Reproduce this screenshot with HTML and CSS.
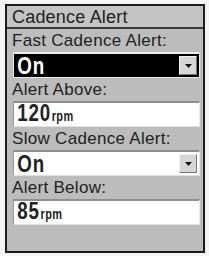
FILE: index.html
```html
<!DOCTYPE html>
<html>

<head>
    <title>Cadence Alert</title>
    <meta charset="utf-8">
    <link rel="stylesheet" href="styles.css">
</head>

<body>
    <div class="screen">
        <div class="title">Cadence Alert</div>

        <div class="label">Fast Cadence Alert:</div>
        <div class="field selected">
            <span class="value">On</span>
            <span class="drop"><svg width="9" height="6" viewBox="0 0 9 6"><polygon points="1,1 8,1 4.5,5" fill="#111"/></svg></span>
        </div>

        <div class="label">Alert Above:</div>
        <div class="field">
            <span class="value">120<span class="unit">rpm</span></span>
        </div>

        <div class="label">Slow Cadence Alert:</div>
        <div class="field">
            <span class="value">On</span>
            <span class="drop"><svg width="9" height="6" viewBox="0 0 9 6"><polygon points="1,1 8,1 4.5,5" fill="#111"/></svg></span>
        </div>

        <div class="label">Alert Below:</div>
        <div class="field">
            <span class="value">85<span class="unit">rpm</span></span>
        </div>
    </div>
</body>

</html>
```

FILE: styles.css
```css
:root {
    --frame_color: #1c1c1c;
    --screen_color: #bcbcbc;
    --title_color: #c4c4c4;
    --text_color: #222222;
}

body {
    margin: 0;
    background: #f4f4f4;
    font-family: "Liberation Sans", Arial, sans-serif;
    color: var(--text_color);
}

.screen {
    width: 196px;
    height: 245px;
    margin: 4px 0 0 5px;
    border: 2px solid var(--frame_color);
    background: var(--screen_color);
    display: flex;
    flex-direction: column;
}

.title {
    height: 21px;
    line-height: 22px;
    padding-left: 5px;
    font-size: 18px;
    background: var(--title_color);
    border-bottom: 2px solid #3a3a3a;
    letter-spacing: 0.2px;
}

.label {
    height: 23px;
    line-height: 23px;
    padding-left: 5px;
    font-size: 17px;
    letter-spacing: 0.3px;
}

.field {
    display: flex;
    align-items: center;
    width: 183px;
    height: 23px;
    margin-left: 6px;
    padding: 0 1px;
    background: #fff;
    border-top: 2px solid #8e8e8e;
    border-left: 1px solid #9a9a9a;
    border-right: 1px solid #e8e8e8;
    border-bottom: 1px solid #e0e0e0;
}

.selected {
    background: #000;
    color: #fff;
    border-color: #ececec;
}

/* the device font is a tall condensed bold */
.value {
    display: inline-block;
    font-size: 24px;
    font-weight: bold;
    line-height: 22px;
    letter-spacing: 1px;
    padding-left: 3px;
    transform: scaleX(0.78);
    transform-origin: left center;
}

.unit {
    font-size: 14px;
    letter-spacing: 0.5px;
    padding-left: 1px;
}

.drop {
    margin-left: auto;
    margin-right: 1px;
    width: 16px;
    height: 17px;
    display: flex;
    align-items: center;
    justify-content: center;
    background: #d6d6d6;
    border: 1px solid #777;
    border-top-color: #f2f2f2;
    border-left-color: #f2f2f2;
}
```
